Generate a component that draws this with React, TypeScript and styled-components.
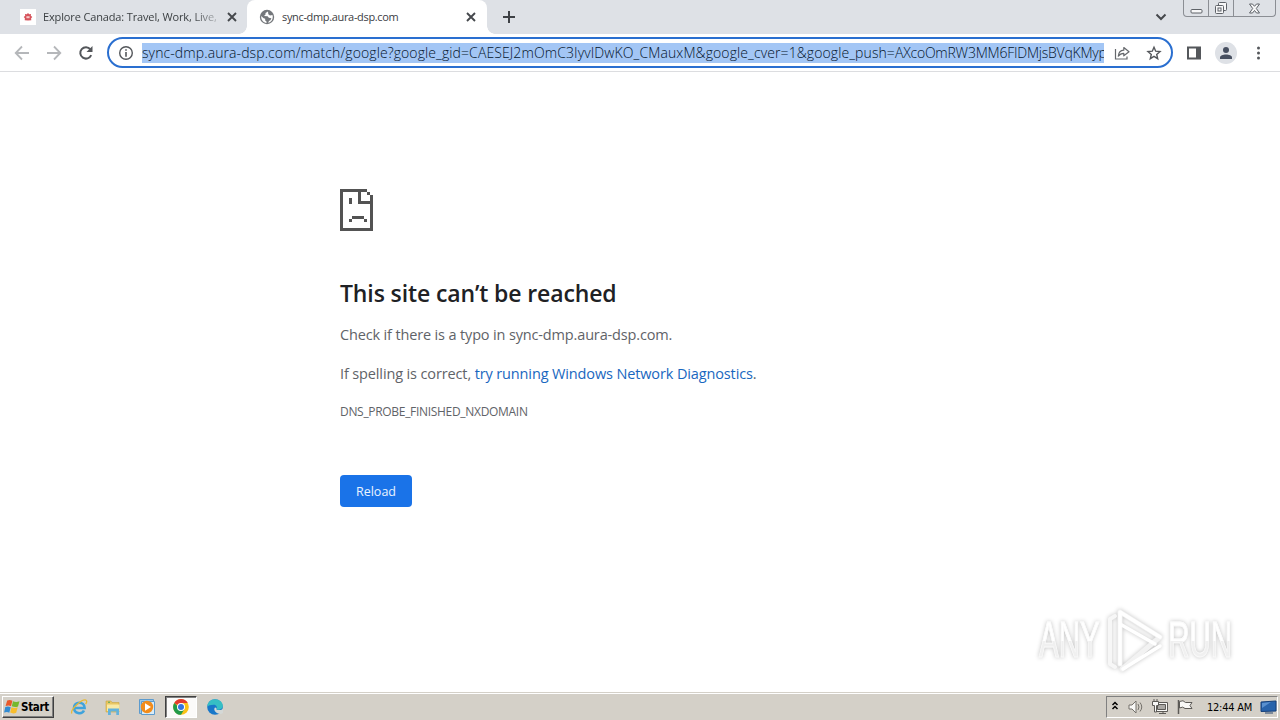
import React from "react";
import styled, { createGlobalStyle } from "styled-components";

const GlobalStyle = createGlobalStyle`
    * {
        box-sizing: border-box;
    }

    body {
        margin: 0;
        background: #fff;
        font-family: "Open Sans", "Noto Sans", sans-serif;
        overflow: hidden;
    }

    svg {
        display: block;
        flex: none;
    }
`;

const Desktop = styled.div`
    display: flex;
    flex-direction: column;
    width: 1280px;
    height: 720px;
    overflow: hidden;
`;

const TabStrip = styled.header`
    display: flex;
    height: 34px;
    flex: none;
    background: #dee1e6;
`;

const Tab = styled.div<{ $active?: boolean }>`
    position: relative;
    display: flex;
    align-items: center;
    width: ${(p) => (p.$active ? 240 : 247)}px;
    padding: 0 ${(p) => (p.$active ? 11 : 10)}px 0 ${(p) => (p.$active ? 12 : 20)}px;
    background: ${(p) => (p.$active ? "#fff" : "transparent")};
    border-radius: 8px 8px 0 0;

    &::before,
    &::after {
        content: ${(p) => (p.$active ? '""' : "none")};
        position: absolute;
        bottom: 0;
        width: 8px;
        height: 8px;
    }

    &::before {
        left: -8px;
        background: radial-gradient(circle at 0 0, transparent 7.5px, #fff 8px);
    }

    &::after {
        right: -8px;
        background: radial-gradient(circle at 100% 0, transparent 7.5px, #fff 8px);
    }
`;

const TabTitle = styled.span<{ $fade?: boolean; $spacing: number }>`
    flex: 1;
    margin: 0 8px 0 7px;
    overflow: hidden;
    white-space: nowrap;
    color: #3c4043;
    font-size: 11px;
    line-height: 18px;
    letter-spacing: ${(p) => p.$spacing}px;
    mask-image: ${(p) => (p.$fade ? "linear-gradient(to right, #000 150px, transparent 182px)" : "none")};
`;

const NewTab = styled.div`
    display: flex;
    align-items: center;
    padding-left: 15px;
`;

const TabSearch = styled.div`
    display: flex;
    align-items: center;
    margin-left: auto;
    padding-right: 16px;
`;

const WindowControls = styled.div`
    display: flex;
    width: 93px;
    height: 17px;
    margin-right: 4px;
    border: 1px solid #8b8e94;
    border-top: 0;
    border-radius: 0 0 4px 4px;
`;

const WindowButton = styled.div<{ $width: number }>`
    display: flex;
    align-items: center;
    justify-content: center;
    width: ${(p) => p.$width}px;

    & + & {
        border-left: 1px solid #8b8e94;
    }
`;

const Toolbar = styled.div`
    display: flex;
    align-items: center;
    height: 38px;
    flex: none;
    padding: 0 14px;
    border-bottom: 1px solid #dcdde0;
`;

const NavButtons = styled.div`
    display: flex;
    gap: 16px;
    width: 93px;
`;

const Omnibox = styled.div`
    display: flex;
    align-items: center;
    width: 1066px;
    height: 31px;
    padding: 0 9px;
    border: 2px solid #2a6fd0;
    border-radius: 16px;
`;

const Url = styled.div`
    width: 963px;
    height: 20px;
    margin: 0 10px 0 8px;
    overflow: hidden;
    background: #a3c6f5;
    color: #04142b;
    font-size: 14px;
    font-weight: 300;
    line-height: 20px;
    letter-spacing: 0.1px;
    white-space: nowrap;
`;

const UrlToken = styled.span`
    letter-spacing: -0.22px;
`;

const OmniboxActions = styled.div`
    display: flex;
    gap: 16px;
`;

const ToolbarActions = styled.div`
    display: flex;
    align-items: center;
    gap: 13px;
    margin-left: 13px;
`;

const Page = styled.main`
    flex: 1;
    display: flex;
    justify-content: space-between;
    padding-left: 340px;
`;

const ErrorBox = styled.section`
    padding-top: 117px;
    white-space: nowrap;
`;

const Heading = styled.h1`
    margin: 45px 0 0;
    color: #202124;
    font-size: 23px;
    font-weight: 600;
    line-height: 34px;
    letter-spacing: -0.12px;
`;

const Message = styled.p<{ $spacing: number }>`
    margin: 15px 0 0;
    color: #5f6368;
    font-size: 14.5px;
    line-height: 20px;
    letter-spacing: ${(p) => p.$spacing}px;

    & + & {
        margin-top: 19px;
    }
`;

const DiagnosticsLink = styled.a`
    color: #1967c0;
`;

const ErrorCode = styled.div`
    margin-top: 18px;
    color: #5f6368;
    font-size: 12px;
    line-height: 20px;
    letter-spacing: -0.31px;
`;

const ReloadButton = styled.button`
    display: block;
    width: 72px;
    height: 32px;
    margin-top: 53px;
    padding: 0;
    border: 0;
    border-radius: 4px;
    background: #1a73e8;
    color: #e9f3ff;
    font: 12.5px "Open Sans", sans-serif;
`;

const Watermark = styled.div`
    display: flex;
    align-items: center;
    align-self: flex-end;
    width: 200px;
    height: 72px;
    margin: 0 45px 16px 0;
    filter: drop-shadow(0 0 2px rgba(0, 0, 0, 0.24));
`;

const WatermarkText = styled.span<{ $width: number }>`
    width: ${(p) => p.$width}px;
    text-align: center;
    font: 400 50px/60px "Liberation Sans", sans-serif;
    white-space: nowrap;

    span {
        display: inline-block;
        margin: 0 -30px;
        transform: scaleX(0.59);
        color: transparent;
        background: linear-gradient(#fff 52%, #f0f0f0 52%);
        background-clip: text;
        -webkit-background-clip: text;
        -webkit-text-stroke: 1px rgba(250, 250, 250, 0.9);
    }
`;

const Taskbar = styled.footer`
    display: flex;
    align-items: center;
    height: 28px;
    flex: none;
    padding: 1px 2px 0;
    border-top: 1px solid #d4d0c8;
    background: #d4d0c8;
    box-shadow: inset 0 1px #fff;
`;

const StartButton = styled.div`
    display: flex;
    align-items: center;
    gap: 1px;
    width: 52px;
    height: 22px;
    padding-left: 1px;
    border: 1px solid;
    border-color: #fff #404040 #404040 #fff;
    box-shadow: inset -1px -1px #808080;
    color: #000;
    font: 700 11.5px "DejaVu Sans Condensed", "DejaVu Sans", sans-serif;
    letter-spacing: -0.3px;
`;

const PinnedApps = styled.div`
    display: flex;
    margin-left: 8px;
`;

const PinnedApp = styled.div<{ $pressed?: boolean }>`
    display: flex;
    align-items: center;
    justify-content: center;
    width: 34px;
    height: 22px;
    border: 1px solid transparent;
    ${(p) => p.$pressed && "border-color: #404040 #fff #fff #404040; box-shadow: inset 1px 1px #808080; background: #fbfaf9; width: 32px; margin: 0 1px;"}
`;

const Tray = styled.div`
    display: flex;
    align-items: center;
    width: 172px;
    height: 22px;
    margin-left: auto;
    padding-left: 4px;
    border: 1px solid;
    border-color: #808080 #fff #fff #808080;
`;

const Clock = styled.span`
    width: 47px;
    margin: 0 6px 0 10px;
    color: #000;
    font: 11px "DejaVu Sans Condensed", "DejaVu Sans", sans-serif;
    letter-spacing: -0.25px;
    white-space: nowrap;
`;

const CloseIcon = () => (
    <svg width="10" height="10" viewBox="0 0 10 10" stroke="#45484c" strokeWidth="1.9">
        <path d="M1 1l8 8M9 1l-8 8" />
    </svg>
);

const CanadaIcon = () => (
    <svg width="16" height="16" viewBox="0 0 16 16">
        <path d="M0 0h16v16H0z" fill="#fff" />
        <path d="M8 4l1.2 1.3 1.8-.4-.2 1.8L12.3 8l-1.2 1.2.2 2L8 11.6l-3.3-.4.2-2L3.7 8l1.5-1.3L5 4.9l1.8.4z" fill="#d6535c" />
        <path d="M6.4 7.2h3.2v2H6.4z" fill="#f6c9c9" />
    </svg>
);

const GlobeIcon = () => (
    <svg width="16" height="16" viewBox="0 0 16 16">
        <circle cx="8" cy="8" r="7.2" fill="#74777b" />
        <path d="M9 2.5L6.5 4v1.5L5 7l3.6.2 1.2 1.5 2.6.5-1 2-1.5.8-.6 2C12 13 13.8 10.8 13.8 8c0-.8-.1-1.300-.4-2L11 6.4 9.300 5.200zM2.200 7l2.400 2.200 1.600.6v1.800l1.300.8v1.500C4.400 13.600 2.200 11 2.200 8z" fill="#fff" />
    </svg>
);

const ArrowIcon: React.FC<{ flip?: boolean }> = ({ flip }) => (
    <svg width="16" height="16" viewBox="0 0 16 16" fill="none" stroke="#b5b7ba" strokeWidth="1.8">
        <path d={flip ? "M1 8h13M8 1.5L14.3 8 8 14.5" : "M15 8H2M8 1.5L1.7 8 8 14.5"} />
    </svg>
);

const ReloadIcon = () => (
    <svg width="16" height="16" viewBox="0 0 16 16">
        <path d="M13.2 10.2A5.7 5.7 0 1 1 12.4 4.3" fill="none" stroke="#54575b" strokeWidth="2" />
        <path d="M14.5 1v6h-6z" fill="#54575b" />
    </svg>
);

const InfoIcon = () => (
    <svg width="16" height="16" viewBox="0 0 16 16">
        <circle cx="8" cy="8" r="6.3" fill="none" stroke="#54575b" strokeWidth="1.4" />
        <path d="M7.2 4.2h1.6v1.6H7.2zM7.2 7h1.6v4.8H7.2z" fill="#54575b" />
    </svg>
);

const ShareIcon = () => (
    <svg width="16" height="16" viewBox="0 0 16 16" fill="none" stroke="#65686c" strokeWidth="1.2">
        <path d="M1.5 4v10H13v-2.5" />
        <path d="M4.3 11.2c.3-4 2.5-5.8 5.5-6V2.5L15 6.8l-5.2 4V8.4c-2.4 0-4 .7-5.5 2.8z" strokeLinejoin="round" />
    </svg>
);

const StarIcon = () => (
    <svg width="16" height="16" viewBox="0 0 16 16" fill="none" stroke="#54575b" strokeWidth="1.4">
        <path d="M8 2.2l1.7 4 4.3.3-3.3 2.9 1 4.3L8 11.4l-3.7 2.3 1-4.3L2 6.5l4.3-.3z" />
    </svg>
);

const SadPageIcon = () => (
    <svg width="33" height="42" viewBox="0 0 33 42" fill="#535353" shapeRendering="crispEdges">
        <path d="M0 0h27v3h-6v9h9V6h3v36H0zM3 3v36h27V15H18V3z" fillRule="evenodd" />
        <path d="M27 3h3v3h-3zM9 9h3v6H9zM12 27h12v3H12zM9 30h3v3H9zM24 30h3v3h-3z" />
    </svg>
);

const PlayLogo = () => (
    <svg width="62" height="66" viewBox="0 0 62 66" fill="none" strokeLinejoin="round" strokeLinecap="round">
        <path d="M12 9L7 12v45l5 3" stroke="#f7f7f7" strokeWidth="4" />
        <path d="M17 5v52M17 5l40 25-38 32" stroke="#f2f2f2" strokeWidth="5" />
        <path d="M17 57V5l40 25M17 17l35 20M20 62l37-23" stroke="#fff" strokeWidth="3.5" />
    </svg>
);

const WindowsIcon = () => (
    <svg width="16" height="16" viewBox="0 0 16 16">
        <path d="M3.2 1.5c2-1 3.5-.7 5.2.3L7 7.3c-1.6-1-3.2-1-5.4-.2z" fill="#e8592b" />
        <path d="M9 2.2c2 1 4 1 6.5.1L14 7.4c-2 .9-4 .8-6.200-.2z" fill="#76b82f" />
        <path d="M1.3 8c2-.9 3.6-.8 5.4.2l-1.4 5.6c-1.6-1-3-1-5.200-.2z" fill="#318bd2" />
        <path d="M7.5 8.2c2 1 4 1 6.2.1l-1.5 5.5c-2 .9-4 .8-6-.2z" fill="#f8bd2d" />
    </svg>
);

const ExplorerIcon = () => (
    <svg width="18" height="18" viewBox="0 0 18 18" fill="none">
        <path d="M14 12.5c-2.3 4.5-10 3.2-10-2.8 0-6.7 10.6-6.7 10.6.3H5" stroke="#3fa3dc" strokeWidth="2.6" />
        <path d="M2 15.5C-.5 12.5 12 .5 16 2.2c1.3.7.6 2.5-.4 4" stroke="#e7b936" strokeWidth="1.3" />
    </svg>
);

const FolderIcon = () => (
    <svg width="18" height="18" viewBox="0 0 18 18">
        <path d="M2 3h5l1 1.5h7V14H2z" fill="#e9c662" stroke="#c9a542" strokeWidth=".6" />
        <path d="M3 6.5h12.5V13H3z" fill="#f9e9a4" />
        <path d="M4 17v-6.5h11V17h-2.7v-3.5H6.8V17z" fill="#63b2dc" />
        <path d="M4 3.7h2v1H4z" fill="#52a75a" />
    </svg>
);

const MediaIcon = () => (
    <svg width="18" height="18" viewBox="0 0 18 18">
        <path d="M1.5 1.5h14v14h-14z" fill="#9bc9ea" stroke="#5c9bce" />
        <path d="M3.5 3.5h13v13h-13z" fill="#d9ecf8" stroke="#5c9bce" />
        <circle cx="9" cy="9" r="6.2" fill="#f28c1b" />
        <path d="M7 5.2l6 3.8-6 3.8z" fill="#fff" />
    </svg>
);

const ChromeIcon = () => (
    <svg width="16" height="16" viewBox="0 0 16 16">
        <circle cx="8" cy="8" r="7.8" fill="#fbc116" />
        <path d="M8 8L1.2 4.1A7.8 7.8 0 0 1 14.8 4.1H8z" fill="#e33b2e" />
        <path d="M1.2 4.1A7.8 7.8 0 0 0 8 15.8l3.5-5.8H8z" fill="#229a49" />
        <circle cx="8" cy="8" r="4" fill="#fff" />
        <circle cx="8" cy="8" r="3" fill="#3474e0" />
    </svg>
);

const EdgeIcon = () => (
    <svg width="16" height="16" viewBox="0 0 16 16">
        <circle cx="8" cy="8" r="7.8" fill="#1877c9" />
        <path d="M.3 7.5C.6 3 4 .2 8 .2c4.5 0 7.8 3 7.8 6.5 0 3-2.6 4.100-5 4-1.200 0-1.700-.6-1.200-1.300.6-1 .2-3.600-2.900-3.600C3.500 5.800 1 6.800.3 7.500z" fill="#36bfc4" />
        <path d="M9.5 10.7c2 .8 4 .4 6.5-.8V14c-1.500 1.400-3 .8-5 .5-2.500-1-4.900-4-3-6 1.500 0 1.800 1.200 1.500 2.200z" fill="#d4d8d6" />
    </svg>
);

const App: React.FC = () => {
    return (
        <Desktop>
            <GlobalStyle />
            <TabStrip>
                <Tab>
                    <CanadaIcon />
                    <TabTitle $fade $spacing={-0.14}>
                        Explore Canada: Travel, Work, Live,
                    </TabTitle>
                    <CloseIcon />
                </Tab>
                <Tab $active>
                    <GlobeIcon />
                    <TabTitle $spacing={-0.34}>sync-dmp.aura-dsp.com</TabTitle>
                    <CloseIcon />
                </Tab>
                <NewTab>
                    <svg width="14" height="14" viewBox="0 0 14 14" stroke="#3e4145" strokeWidth="2">
                        <path d="M7 1v12M1 7h12" />
                    </svg>
                </NewTab>
                <TabSearch>
                    <svg width="12" height="10" viewBox="0 0 12 10" fill="none" stroke="#45484c" strokeWidth="2">
                        <path d="M1.5 2.5L6 7l4.5-4.5" />
                    </svg>
                </TabSearch>
                <WindowControls>
                    <WindowButton $width={25}>
                        <svg width="13" height="15" viewBox="0 0 13 15">
                            <rect x="1" y="8.5" width="11" height="3.5" rx="1" fill="#f7f7f8" stroke="#5e6268" />
                        </svg>
                    </WindowButton>
                    <WindowButton $width={25}>
                        <svg width="14" height="16" viewBox="0 0 14 16" fill="#f7f7f8" stroke="#5e6268">
                            <rect x="4.5" y="2.5" width="8" height="8" rx="1" />
                            <rect x="1.5" y="5.5" width="8" height="8" rx="1" />
                            <rect x="4" y="8" width="3" height="3" />
                        </svg>
                    </WindowButton>
                    <WindowButton $width={43}>
                        <svg width="13" height="13" viewBox="0 0 13 13" fill="#f7f7f8" stroke="#5e6268">
                            <path d="M1.5 2h3l2 2.3L8.500 2h3L8.300 6.500l3.200 4.500h-3l-2-2.500-2 2.500h-3l3.200-4.500z" />
                        </svg>
                    </WindowButton>
                </WindowControls>
            </TabStrip>
            <Toolbar>
                <NavButtons>
                    <ArrowIcon />
                    <ArrowIcon flip />
                    <ReloadIcon />
                </NavButtons>
                <Omnibox>
                    <InfoIcon />
                    <Url>
                        sync-dmp.aura-dsp.com/match/google?google_gid=CAESEJ2mOmC3IyvIDwKO_CMauxM&amp;google_cver=1&amp;google_push=
                        <UrlToken>AXcoOmRW3MM6FIDMjsBVqKMyp</UrlToken>
                    </Url>
                    <OmniboxActions>
                        <ShareIcon />
                        <StarIcon />
                    </OmniboxActions>
                </Omnibox>
                <ToolbarActions>
                    <svg width="16" height="16" viewBox="0 0 16 16" fill="#54575b">
                        <path d="M1 1.5h14v13H1zM3 3.500v9h7v-9z" fillRule="evenodd" />
                    </svg>
                    <svg width="22" height="22" viewBox="0 0 22 22">
                        <circle cx="11" cy="11" r="11" fill="#dee1e6" />
                        <circle cx="11" cy="8" r="3" fill="#474f60" />
                        <path d="M5 17v-1.5c0-4 12-4 12 0V17z" fill="#474f60" />
                    </svg>
                    <svg width="16" height="16" viewBox="0 0 16 16" fill="#54575b">
                        <circle cx="8.5" cy="3" r="1.5" />
                        <circle cx="8.5" cy="8" r="1.5" />
                        <circle cx="8.5" cy="13" r="1.5" />
                    </svg>
                </ToolbarActions>
            </Toolbar>
            <Page>
                <ErrorBox>
                    <SadPageIcon />
                    <Heading>This site can’t be reached</Heading>
                    <Message $spacing={-0.15}>Check if there is a typo in sync-dmp.aura-dsp.com.</Message>
                    <Message $spacing={-0.13}>
                        If spelling is correct, <DiagnosticsLink>try running Windows Network Diagnostics</DiagnosticsLink>.
                    </Message>
                    <ErrorCode>DNS_PROBE_FINISHED_NXDOMAIN</ErrorCode>
                    <ReloadButton>Reload</ReloadButton>
                </ErrorBox>
                <Watermark>
                    <WatermarkText $width={68}>
                        <span>ANY</span>
                    </WatermarkText>
                    <PlayLogo />
                    <WatermarkText $width={70}>
                        <span>RUN</span>
                    </WatermarkText>
                </Watermark>
            </Page>
            <Taskbar>
                <StartButton>
                    <WindowsIcon />
                    Start
                </StartButton>
                <PinnedApps>
                    <PinnedApp>
                        <ExplorerIcon />
                    </PinnedApp>
                    <PinnedApp>
                        <FolderIcon />
                    </PinnedApp>
                    <PinnedApp>
                        <MediaIcon />
                    </PinnedApp>
                    <PinnedApp $pressed>
                        <ChromeIcon />
                    </PinnedApp>
                    <PinnedApp>
                        <EdgeIcon />
                    </PinnedApp>
                </PinnedApps>
                <Tray>
                    <svg width="8" height="12" viewBox="0 0 8 12" fill="none" stroke="#000" strokeWidth="1.5">
                        <path d="M1.5 4L4 1.500 6.500 4M1.500 8L4 5.500 6.500 8" />
                    </svg>
                    <svg width="26" height="16" viewBox="-6 0 26 16" fill="#f8f8f6" stroke="#74716b">
                        <path d="M4 6h3l4-4v12l-4-4H4z" />
                        <path d="M13 5q2 3 0 6M15 3.500q3.500 4.500 0 9" fill="none" />
                    </svg>
                    <svg width="28" height="16" viewBox="-2 0 28 16" fill="#f8f8f6" stroke="#5c5a56">
                        <path d="M8.500 3.500h12v9h-12zM12 14.500h7M16 12.500v2" />
                        <path d="M10.500 5.500h8v5h-8z" fill="#aaa8a4" />
                        <path d="M5.500 2.500h6v4h-2V13h-2V6.500h-2zM7 0v3M10 0v3" />
                    </svg>
                    <svg width="24" height="16" viewBox="2 0 24 16" fill="#f8f8f6" stroke="#5c5a56">
                        <path d="M7.500 1v14" strokeWidth="1.5" />
                        <path d="M8.500 2.500q4-2 6 1h6.500l-2 3 2 3h-7q-2-2.500-5.500-.5z" />
                    </svg>
                    <Clock>12:44 AM</Clock>
                    <svg width="17" height="14" viewBox="0 0 17 14">
                        <path d="M1 2l15-1v10l-15 .5z" fill="#2863ab" stroke="#153f79" />
                        <path d="M2 3l9-1-9 6z" fill="#5990cf" />
                        <path d="M5 13h8" stroke="#29476e" />
                    </svg>
                </Tray>
            </Taskbar>
        </Desktop>
    );
};

export default App;
